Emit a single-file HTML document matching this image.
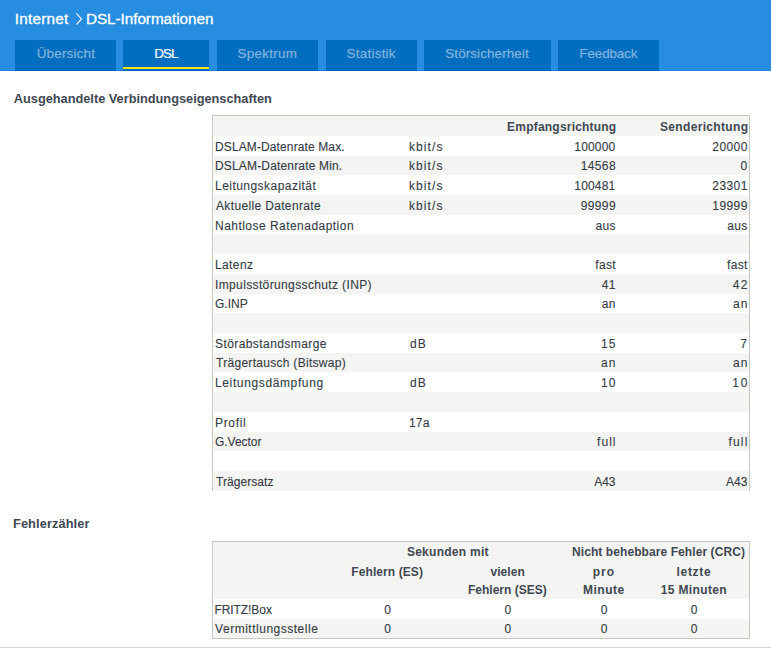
<!DOCTYPE html>
<html><head><meta charset="utf-8"><title>DSL-Informationen</title>
<style>
html,body{margin:0;padding:0;width:771px;height:648px;overflow:hidden;background:#fff}
body{position:relative;font-family:"Liberation Sans", sans-serif;color:#353c46}
.t{position:absolute;white-space:nowrap;line-height:20px}
.r{position:absolute}
</style></head><body>
<div class="r" style="left:0px;top:0px;width:771px;height:71px;background:#268de0"></div>
<div class="r" style="left:15px;top:40px;width:101px;height:31px;background:#006ec0"></div>
<div class="r" style="left:123px;top:40px;width:86px;height:31px;background:#006ec0"></div>
<div class="r" style="left:123px;top:67px;width:86px;height:2px;background:#f2e500"></div>
<div class="r" style="left:217px;top:40px;width:101px;height:31px;background:#006ec0"></div>
<div class="r" style="left:326px;top:40px;width:91px;height:31px;background:#006ec0"></div>
<div class="r" style="left:424px;top:40px;width:127px;height:31px;background:#006ec0"></div>
<div class="r" style="left:558px;top:40px;width:101px;height:31px;background:#006ec0"></div>
<div class="r" style="left:212px;top:115px;width:538px;height:1px;background:#c6c7bf"></div>
<div class="r" style="left:212px;top:115px;width:1px;height:376px;background:#c6c7bf"></div>
<div class="r" style="left:749px;top:115px;width:1px;height:376px;background:#c6c7bf"></div>
<div style="position:absolute;left:213px;top:116.25px;width:536px"><div style="height:19.703125px;background:#f4f4f2"></div><div style="height:19.703125px;background:#fff"></div><div style="height:19.703125px;background:#f4f4f2"></div><div style="height:19.703125px;background:#fff"></div><div style="height:19.703125px;background:#f4f4f2"></div><div style="height:19.703125px;background:#fff"></div><div style="height:19.703125px;background:#f4f4f2"></div><div style="height:19.703125px;background:#fff"></div><div style="height:19.703125px;background:#f4f4f2"></div><div style="height:19.703125px;background:#fff"></div><div style="height:19.703125px;background:#f4f4f2"></div><div style="height:19.703125px;background:#fff"></div><div style="height:19.703125px;background:#f4f4f2"></div><div style="height:19.703125px;background:#fff"></div><div style="height:19.703125px;background:#f4f4f2"></div><div style="height:19.703125px;background:#fff"></div><div style="height:19.703125px;background:#f4f4f2"></div><div style="height:19.703125px;background:#fff"></div><div style="height:19.703125px;background:#f4f4f2"></div></div>
<div class="r" style="left:212px;top:541px;width:538px;height:1px;background:#c6c7bf"></div>
<div class="r" style="left:212px;top:541px;width:1px;height:98px;background:#c6c7bf"></div>
<div class="r" style="left:749px;top:541px;width:1px;height:98px;background:#c6c7bf"></div>
<div class="r" style="left:212px;top:638px;width:538px;height:1px;background:#c6c7bf"></div>
<div style="position:absolute;left:213px;top:542px;width:536px"><div style="height:57px;background:#f4f4f2"></div><div style="height:19.703125px;background:#fff"></div><div style="height:19.296875px;background:#f4f4f2"></div></div>
<div class="r" style="left:0px;top:647px;width:771px;height:1px;background:#d4d4d4"></div>
<div class="r" style="left:0;top:70px;width:771px;height:1px;background:rgba(0,30,110,0.07)"></div>
<svg style="position:absolute;left:74px;top:12px" width="10" height="14" viewBox="0 0 10 14"><polyline points="2.3,1.3 7.6,7 2.3,12.7" fill="none" stroke="#f4f8fc" stroke-width="1.15"/></svg>
<span class="t" style="left:14.80px;top:9px;font-size:15.3px;color:#fff;letter-spacing:0.229px;-webkit-text-stroke:0.3px #fff;">Internet</span>
<span class="t" style="left:85.90px;top:9px;font-size:15.3px;color:#fff;letter-spacing:-0.050px;-webkit-text-stroke:0.3px #fff;">DSL-Informationen</span>
<span class="t" style="left:36.70px;top:44px;font-size:13.5px;color:#86b5dd;letter-spacing:0.150px;-webkit-text-stroke:0.15px #86b5dd;">Übersicht</span>
<span class="t" style="left:154.20px;top:44px;font-size:13.5px;color:#fff;letter-spacing:-0.950px;-webkit-text-stroke:0.15px #fff;">DSL</span>
<span class="t" style="left:237.50px;top:44px;font-size:13.5px;color:#86b5dd;letter-spacing:0.257px;-webkit-text-stroke:0.15px #86b5dd;">Spektrum</span>
<span class="t" style="left:346.60px;top:44px;font-size:13.5px;color:#86b5dd;letter-spacing:0.212px;-webkit-text-stroke:0.15px #86b5dd;">Statistik</span>
<span class="t" style="left:445.30px;top:44px;font-size:13.5px;color:#86b5dd;letter-spacing:0.062px;-webkit-text-stroke:0.15px #86b5dd;">Störsicherheit</span>
<span class="t" style="left:579.50px;top:44px;font-size:13.5px;color:#86b5dd;letter-spacing:-0.200px;-webkit-text-stroke:0.15px #86b5dd;">Feedback</span>
<span class="t" style="left:13.80px;top:89px;font-size:12.8px;font-weight:700;color:#414853;letter-spacing:-0.022px;">Ausgehandelte Verbindungseigenschaften</span>
<span class="t" style="left:507.10px;top:117px;font-size:12px;font-weight:700;color:#414853;letter-spacing:0.207px;">Empfangsrichtung</span>
<span class="t" style="left:660.00px;top:117px;font-size:12px;font-weight:700;color:#414853;letter-spacing:0.333px;">Senderichtung</span>
<span class="t" style="left:215.00px;top:137px;font-size:12px;letter-spacing:0.116px;-webkit-text-stroke:0.12px #353c46;">DSLAM-Datenrate Max.</span>
<span class="t" style="left:409.00px;top:137px;font-size:12px;letter-spacing:1.080px;-webkit-text-stroke:0.12px #353c46;">kbit/s</span>
<span class="t" style="left:574.30px;top:137px;font-size:12px;letter-spacing:0.180px;-webkit-text-stroke:0.12px #353c46;">100000</span>
<span class="t" style="left:712.30px;top:137px;font-size:12px;letter-spacing:0.425px;-webkit-text-stroke:0.12px #353c46;">20000</span>
<span class="t" style="left:215.00px;top:156px;font-size:12px;letter-spacing:0.163px;-webkit-text-stroke:0.12px #353c46;">DSLAM-Datenrate Min.</span>
<span class="t" style="left:409.00px;top:156px;font-size:12px;letter-spacing:1.080px;-webkit-text-stroke:0.12px #353c46;">kbit/s</span>
<span class="t" style="left:580.70px;top:156px;font-size:12px;letter-spacing:0.375px;-webkit-text-stroke:0.12px #353c46;">14568</span>
<span class="t" style="left:740.50px;top:156px;font-size:12px;-webkit-text-stroke:0.12px #353c46;">0</span>
<span class="t" style="left:215.00px;top:176px;font-size:12px;letter-spacing:0.462px;-webkit-text-stroke:0.12px #353c46;">Leitungskapazität</span>
<span class="t" style="left:409.00px;top:176px;font-size:12px;letter-spacing:1.080px;-webkit-text-stroke:0.12px #353c46;">kbit/s</span>
<span class="t" style="left:574.30px;top:176px;font-size:12px;letter-spacing:0.180px;-webkit-text-stroke:0.12px #353c46;">100481</span>
<span class="t" style="left:712.30px;top:176px;font-size:12px;letter-spacing:0.425px;-webkit-text-stroke:0.12px #353c46;">23301</span>
<span class="t" style="left:216.00px;top:196px;font-size:12px;letter-spacing:0.347px;-webkit-text-stroke:0.12px #353c46;">Aktuelle Datenrate</span>
<span class="t" style="left:409.00px;top:196px;font-size:12px;letter-spacing:1.080px;-webkit-text-stroke:0.12px #353c46;">kbit/s</span>
<span class="t" style="left:580.70px;top:196px;font-size:12px;letter-spacing:0.375px;-webkit-text-stroke:0.12px #353c46;">99999</span>
<span class="t" style="left:712.30px;top:196px;font-size:12px;letter-spacing:0.425px;-webkit-text-stroke:0.12px #353c46;">19999</span>
<span class="t" style="left:215.00px;top:216px;font-size:12px;letter-spacing:0.467px;-webkit-text-stroke:0.12px #353c46;">Nahtlose Ratenadaption</span>
<span class="t" style="left:595.60px;top:216px;font-size:12px;letter-spacing:0.300px;-webkit-text-stroke:0.12px #353c46;">aus</span>
<span class="t" style="left:727.20px;top:216px;font-size:12px;letter-spacing:0.400px;-webkit-text-stroke:0.12px #353c46;">aus</span>
<span class="t" style="left:215.00px;top:255px;font-size:12px;letter-spacing:0.380px;-webkit-text-stroke:0.12px #353c46;">Latenz</span>
<span class="t" style="left:595.30px;top:255px;font-size:12px;letter-spacing:0.300px;-webkit-text-stroke:0.12px #353c46;">fast</span>
<span class="t" style="left:727.00px;top:255px;font-size:12px;letter-spacing:0.333px;-webkit-text-stroke:0.12px #353c46;">fast</span>
<span class="t" style="left:215.00px;top:275px;font-size:12px;letter-spacing:0.368px;-webkit-text-stroke:0.12px #353c46;">Impulsstörungsschutz (INP)</span>
<span class="t" style="left:601.70px;top:275px;font-size:12px;letter-spacing:0.500px;-webkit-text-stroke:0.12px #353c46;">41</span>
<span class="t" style="left:732.80px;top:275px;font-size:12px;letter-spacing:1.200px;-webkit-text-stroke:0.12px #353c46;">42</span>
<span class="t" style="left:215.00px;top:294px;font-size:12px;-webkit-text-stroke:0.12px #353c46;">G.INP</span>
<span class="t" style="left:601.70px;top:294px;font-size:12px;letter-spacing:0.500px;-webkit-text-stroke:0.12px #353c46;">an</span>
<span class="t" style="left:733.00px;top:294px;font-size:12px;letter-spacing:1.000px;-webkit-text-stroke:0.12px #353c46;">an</span>
<span class="t" style="left:215.00px;top:334px;font-size:12px;letter-spacing:0.419px;-webkit-text-stroke:0.12px #353c46;">Störabstandsmarge</span>
<span class="t" style="left:410.00px;top:334px;font-size:12px;letter-spacing:1.200px;-webkit-text-stroke:0.12px #353c46;">dB</span>
<span class="t" style="left:601.00px;top:334px;font-size:12px;letter-spacing:1.200px;-webkit-text-stroke:0.12px #353c46;">15</span>
<span class="t" style="left:740.15px;top:334px;font-size:12px;-webkit-text-stroke:0.12px #353c46;">7</span>
<span class="t" style="left:216.00px;top:353px;font-size:12px;letter-spacing:0.290px;-webkit-text-stroke:0.12px #353c46;">Trägertausch (Bitswap)</span>
<span class="t" style="left:601.00px;top:353px;font-size:12px;letter-spacing:1.200px;-webkit-text-stroke:0.12px #353c46;">an</span>
<span class="t" style="left:733.00px;top:353px;font-size:12px;letter-spacing:1.000px;-webkit-text-stroke:0.12px #353c46;">an</span>
<span class="t" style="left:215.00px;top:373px;font-size:12px;letter-spacing:0.627px;-webkit-text-stroke:0.12px #353c46;">Leitungsdämpfung</span>
<span class="t" style="left:410.00px;top:373px;font-size:12px;letter-spacing:1.200px;-webkit-text-stroke:0.12px #353c46;">dB</span>
<span class="t" style="left:601.00px;top:373px;font-size:12px;letter-spacing:1.200px;-webkit-text-stroke:0.12px #353c46;">10</span>
<span class="t" style="left:732.30px;top:373px;font-size:12px;letter-spacing:1.700px;-webkit-text-stroke:0.12px #353c46;">10</span>
<span class="t" style="left:215.00px;top:413px;font-size:12px;letter-spacing:0.660px;-webkit-text-stroke:0.12px #353c46;">Profil</span>
<span class="t" style="left:409.00px;top:413px;font-size:12px;letter-spacing:0.150px;-webkit-text-stroke:0.12px #353c46;">17a</span>
<span class="t" style="left:215.00px;top:432px;font-size:12px;letter-spacing:-0.029px;-webkit-text-stroke:0.12px #353c46;">G.Vector</span>
<span class="t" style="left:597.10px;top:432px;font-size:12px;letter-spacing:1.033px;-webkit-text-stroke:0.12px #353c46;">full</span>
<span class="t" style="left:728.60px;top:432px;font-size:12px;letter-spacing:1.133px;-webkit-text-stroke:0.12px #353c46;">full</span>
<span class="t" style="left:216.00px;top:472px;font-size:12px;letter-spacing:0.067px;-webkit-text-stroke:0.12px #353c46;">Trägersatz</span>
<span class="t" style="left:594.20px;top:472px;font-size:12px;-webkit-text-stroke:0.12px #353c46;">A43</span>
<span class="t" style="left:726.00px;top:472px;font-size:12px;-webkit-text-stroke:0.12px #353c46;">A43</span>
<span class="t" style="left:13.00px;top:514px;font-size:12.8px;font-weight:700;color:#414853;letter-spacing:0.091px;">Fehlerzähler</span>
<span class="t" style="left:406.90px;top:542px;font-size:12px;font-weight:700;color:#414853;letter-spacing:0.273px;">Sekunden mit</span>
<span class="t" style="left:572.00px;top:542px;font-size:12px;font-weight:700;color:#414853;letter-spacing:0.081px;">Nicht behebbare Fehler (CRC)</span>
<span class="t" style="left:351.30px;top:562px;font-size:12px;font-weight:700;color:#414853;letter-spacing:0.082px;">Fehlern (ES)</span>
<span class="t" style="left:490.40px;top:562px;font-size:12px;font-weight:700;color:#414853;letter-spacing:0.100px;">vielen</span>
<span class="t" style="left:468.00px;top:580px;font-size:12px;font-weight:700;color:#414853;">Fehlern (SES)</span>
<span class="t" style="left:592.70px;top:562px;font-size:12px;font-weight:700;color:#414853;letter-spacing:1.000px;">pro</span>
<span class="t" style="left:582.90px;top:580px;font-size:12px;font-weight:700;color:#414853;letter-spacing:0.540px;">Minute</span>
<span class="t" style="left:676.50px;top:562px;font-size:12px;font-weight:700;color:#414853;letter-spacing:0.700px;">letzte</span>
<span class="t" style="left:660.70px;top:580px;font-size:12px;font-weight:700;color:#414853;letter-spacing:0.367px;">15 Minuten</span>
<span class="t" style="left:214.40px;top:600px;font-size:12px;letter-spacing:-0.063px;-webkit-text-stroke:0.12px #353c46;">FRITZ!Box</span>
<span class="t" style="left:215.10px;top:619px;font-size:12px;letter-spacing:0.512px;-webkit-text-stroke:0.12px #353c46;">Vermittlungsstelle</span>
<span class="t" style="left:384.30px;top:600px;font-size:12px;-webkit-text-stroke:0.12px #353c46;">0</span>
<span class="t" style="left:504.50px;top:600px;font-size:12px;-webkit-text-stroke:0.12px #353c46;">0</span>
<span class="t" style="left:600.70px;top:600px;font-size:12px;-webkit-text-stroke:0.12px #353c46;">0</span>
<span class="t" style="left:690.80px;top:600px;font-size:12px;-webkit-text-stroke:0.12px #353c46;">0</span>
<span class="t" style="left:384.30px;top:619px;font-size:12px;-webkit-text-stroke:0.12px #353c46;">0</span>
<span class="t" style="left:504.50px;top:619px;font-size:12px;-webkit-text-stroke:0.12px #353c46;">0</span>
<span class="t" style="left:600.70px;top:619px;font-size:12px;-webkit-text-stroke:0.12px #353c46;">0</span>
<span class="t" style="left:690.80px;top:619px;font-size:12px;-webkit-text-stroke:0.12px #353c46;">0</span>
</body></html>
